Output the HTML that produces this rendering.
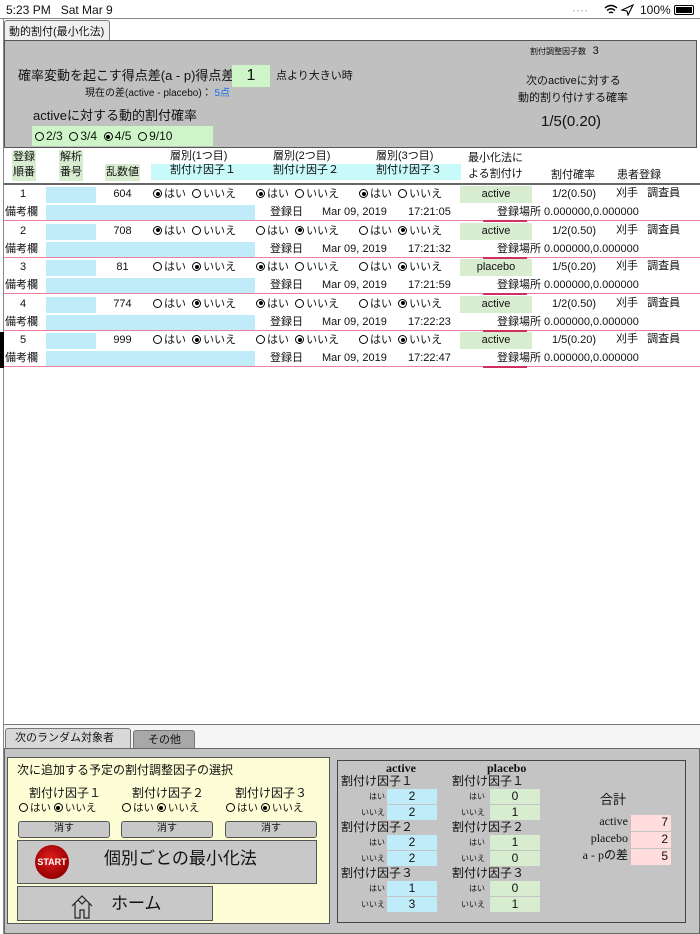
<!DOCTYPE html>
<html><head><meta charset="utf-8"><style>
*{margin:0;padding:0;box-sizing:border-box}
body{width:700px;height:934px;position:relative;background:#fff;font-family:"Liberation Sans","Noto Sans CJK JP",sans-serif;color:#111;overflow:hidden;font-size:11px;line-height:1.2}
.a{position:absolute;white-space:nowrap}
.r{display:inline-block;width:9px;height:9px;border:1px solid #000;border-radius:50%;vertical-align:-1px;margin-right:2px;position:relative}
.r.on::after{content:"";position:absolute;left:1.5px;top:1.5px;width:4px;height:4px;background:#000;border-radius:50%}
.blue{background:#c0ecfa}
.grn{background:#d8ecd0}
.cy{background:#c8fafa}
.btn{position:absolute;background:#c8c8c8;border:1.5px solid #555;border-radius:3px;text-align:center}
</style></head><body>
<div class="a" style="left:6px;top:3px;font-size:12px">5:23 PM&nbsp;&nbsp;&nbsp;Sat Mar 9</div>
<div class="a" style="left:572px;top:3px;font-size:12px;color:#999">&middot;&middot;&middot;&middot;</div>
<svg class="a" style="left:604px;top:4px" width="32" height="12" viewBox="0 0 32 12"><path d="M1 4 Q7 -1 13 4 M3 6.5 Q7 3 11 6.5 M5 9 Q7 7.5 9 9" fill="none" stroke="#000" stroke-width="1.4"/><path d="M18 6 L29 1 L24 11 L23 7 Z" fill="none" stroke="#000" stroke-width="1.1"/></svg>
<div class="a" style="left:640px;top:3px;font-size:12px">100%</div>
<div class="a" style="left:674px;top:5px;width:20px;height:10px;border:1px solid #000;border-radius:2px;padding:1px"><div style="background:#000;width:100%;height:100%"></div></div>
<div class="a" style="left:0;top:18px;width:700px;height:1px;background:#888"></div>
<div class="a" style="left:3px;top:19px;width:1px;height:915px;background:#888"></div>
<div class="a" style="left:4px;top:20px;width:106px;height:22px;background:#f0f0f0;border:1px solid #777;border-bottom:none;border-radius:3px 3px 0 0;padding:5px 0 0 4px;font-size:11px">動的割付(最小化法)</div>
<div class="a" style="left:4px;top:40px;width:693px;height:108px;background:#c0c0c0;border:1px solid #555"></div>
<div class="a" style="left:530px;top:45px;font-size:8px">割付調整因子数&nbsp;&nbsp;&nbsp;<span style="font-size:11px">3</span></div>
<div class="a" style="left:18px;top:68px;font-size:13px">確率変動を起こす得点差(a - p)得点差</div>
<div class="a" style="left:232px;top:65px;width:38px;height:22px;background:#cdf5c8;font-size:16px;text-align:center;line-height:22px">1</div>
<div class="a" style="left:276px;top:70px;font-size:11px">点より大きい時</div>
<div class="a" style="left:85px;top:88px;font-size:10px">現在の差(active - placebo)： <span style="color:#1e6ef0">5点</span></div>
<div class="a" style="left:33px;top:108px;font-size:13px">activeに対する動的割付確率</div>
<div class="a" style="left:32px;top:126px;width:181px;height:20px;background:#cdf5c8;font-size:12px;padding:3px 0 0 3px"><span class="r"></span>2/3&nbsp; <span class="r"></span>3/4&nbsp; <span class="r on"></span>4/5&nbsp; <span class="r"></span>9/10</div>
<div class="a" style="left:526px;top:75px;font-size:11px">次のactiveに対する</div>
<div class="a" style="left:518px;top:92px;font-size:11px">動的割り付けする確率</div>
<div class="a" style="left:541px;top:113px;font-size:15px">1/5(0.20)</div>
<div class="a grn" style="left:12px;top:150px;width:24px;height:31px;font-size:11px;line-height:15px;text-align:center">登録<br>順番</div>
<div class="a grn" style="left:59px;top:150px;width:24px;height:31px;font-size:11px;line-height:15px;text-align:center">解析<br>番号</div>
<div class="a grn" style="left:105px;top:164px;width:35px;height:17px;font-size:11px;line-height:17px;text-align:center">乱数値</div>
<div class="a cy" style="left:151px;top:164px;width:310px;height:16px"></div>
<div class="a" style="left:170px;top:150px;font-size:11px">層別(1つ目)</div>
<div class="a" style="left:273px;top:150px;font-size:11px">層別(2つ目)</div>
<div class="a" style="left:376px;top:150px;font-size:11px">層別(3つ目)</div>
<div class="a" style="left:170px;top:164px;font-size:11px">割付け因子１</div>
<div class="a" style="left:273px;top:164px;font-size:11px">割付け因子２</div>
<div class="a" style="left:376px;top:164px;font-size:11px">割付け因子３</div>
<div class="a" style="left:468px;top:152px;font-size:11px">最小化法に</div>
<div class="a" style="left:468px;top:168px;font-size:11px">よる割付け</div>
<div class="a" style="left:551px;top:169px;font-size:11px">割付確率</div>
<div class="a" style="left:617px;top:169px;font-size:11px">患者登録</div>
<div class="a" style="left:4px;top:183px;width:696px;height:2px;background:#666"></div>
<div id="rows"></div>
<div class="a" style="left:0;top:332px;width:4px;height:36px;background:#000"></div>
<div class="a" style="left:4px;top:724px;width:696px;height:1px;background:#777"></div>
<div class="a" style="left:4px;top:725px;width:696px;height:24px;background:#f5f5f5"></div>
<div class="a" style="left:5px;top:728px;width:126px;height:21px;background:#d8d8d8;border:1px solid #777;border-bottom:none;border-radius:3px 3px 0 0;font-size:11px;padding:3px 0 0 9px">次のランダム対象者</div>
<div class="a" style="left:133px;top:730px;width:62px;height:19px;background:#a8a8a8;border:1px solid #777;border-bottom:none;border-radius:3px 3px 0 0;font-size:11px;padding:3px 0 0 14px">その他</div>
<div class="a" style="left:4px;top:748px;width:696px;height:186px;background:#c4c4c4;border:1px solid #666"></div>
<div class="a" style="left:7px;top:757px;width:323px;height:167px;background:#fdfdd6;border:1px solid #555"></div>
<div class="a" style="left:17px;top:763px;font-size:12px">次に追加する予定の割付調整因子の選択</div>
<div class="a" style="left:29px;top:786px;font-size:12px">割付け因子１</div>
<div class="a" style="left:132px;top:786px;font-size:12px">割付け因子２</div>
<div class="a" style="left:235px;top:786px;font-size:12px">割付け因子３</div>
<div class="a" style="left:19px;top:802px;font-size:10.5px"><span class="r"></span>はい <span class="r on"></span>いいえ</div>
<div class="a" style="left:122px;top:802px;font-size:10.5px"><span class="r"></span>はい <span class="r on"></span>いいえ</div>
<div class="a" style="left:226px;top:802px;font-size:10.5px"><span class="r"></span>はい <span class="r on"></span>いいえ</div>
<div class="btn" style="left:18px;top:821px;width:92px;height:17px;font-size:10px;line-height:13px">消す</div>
<div class="btn" style="left:121px;top:821px;width:92px;height:17px;font-size:10px;line-height:13px">消す</div>
<div class="btn" style="left:225px;top:821px;width:92px;height:17px;font-size:10px;line-height:13px">消す</div>
<div class="a" style="left:17px;top:840px;width:300px;height:44px;background:#c8c8c8;border:1.5px solid #555"></div>
<div class="a" style="left:35px;top:845px;width:34px;height:34px;border-radius:50%;background:radial-gradient(circle at 45% 40%,#e02020,#900 70%,#300);color:#fff;font-size:9px;font-weight:bold;text-align:center;line-height:34px">START</div>
<div class="a" style="left:104px;top:849px;font-size:17px">個別ごとの最小化法</div>
<div class="a" style="left:17px;top:886px;width:196px;height:35px;background:#c8c8c8;border:1.5px solid #555"></div>
<svg class="a" style="left:70px;top:893px" width="24" height="26" viewBox="0 0 24 26"><path d="M2 13 L12 3 L22 13 M5 10 V25 H10 V17 H14 V25 H19 V10 M8 7 L12 11 L16 7" fill="none" stroke="#222" stroke-width="1.2"/></svg>
<div class="a" style="left:111px;top:894px;font-size:17px">ホーム</div>
<div class="a" style="left:337px;top:760px;width:349px;height:163px;border:1px solid #444"></div>
<div class="a" style="left:386px;top:761px;font-family:'Liberation Serif',serif;font-weight:bold;font-size:12px">active</div>
<div class="a" style="left:487px;top:761px;font-family:'Liberation Serif',serif;font-weight:bold;font-size:12px">placebo</div>
<div id="sum"></div>
<div class="a" style="left:600px;top:792px;font-size:13px">合計</div>
<div class="a" style="left:590px;top:814px;font-family:'Liberation Serif',serif;font-size:12px;width:38px;text-align:right">active</div>
<div class="a" style="left:580px;top:831px;font-family:'Liberation Serif',serif;font-size:12px;width:48px;text-align:right">placebo</div>
<div class="a" style="left:570px;top:848px;font-family:'Liberation Serif',serif;font-size:12px;width:58px;text-align:right">a - pの差</div>
<div class="a" style="left:631px;top:815px;width:40px;height:16px;background:#fdd;text-align:right;padding-right:3px;font-size:12px">7</div>
<div class="a" style="left:631px;top:832px;width:40px;height:16px;background:#fdd;text-align:right;padding-right:3px;font-size:12px">2</div>
<div class="a" style="left:631px;top:849px;width:40px;height:16px;background:#fdd;text-align:right;padding-right:3px;font-size:12px">5</div>
<script>
var rows=[["1","604",1,1,1,"active","1/2(0.50)","17:21:05"],["2","708",1,0,0,"active","1/2(0.50)","17:21:32"],["3","81",0,1,0,"placebo","1/5(0.20)","17:21:59"],["4","774",0,1,0,"active","1/2(0.50)","17:22:23"],["5","999",0,0,0,"active","1/5(0.20)","17:22:47"]];
var h="";
rows.forEach(function(r,i){var y=185+i*36.6;
function rad(x,v){return '<div class="a" style="left:'+x+'px;top:'+(y+3)+'px"><span class="r'+(v?' on':'')+'"></span>はい&nbsp; <span class="r'+(v?'':' on')+'"></span>いいえ</div>';}
h+='<div class="a" style="left:18px;top:'+(y+3)+'px;width:10px;text-align:center">'+r[0]+'</div>';
h+='<div class="a blue" style="left:46px;top:'+(y+2)+'px;width:50px;height:16px"></div>';
h+='<div class="a" style="left:105px;top:'+(y+3)+'px;width:35px;text-align:center">'+r[1]+'</div>';
h+=rad(153,r[2])+rad(256,r[3])+rad(359,r[4]);
h+='<div class="a grn" style="left:460px;top:'+(y+1)+'px;width:72px;height:17px;text-align:center;line-height:17px">'+r[5]+'</div>';
h+='<div class="a" style="left:552px;top:'+(y+3)+'px">'+r[6]+'</div>';
h+='<div class="a" style="left:616px;top:'+(y+2)+'px">刈手&nbsp;&nbsp;&nbsp;調査員</div>';
h+='<div class="a" style="left:5px;top:'+(y+21)+'px">備考欄</div>';
h+='<div class="a blue" style="left:46px;top:'+(y+20)+'px;width:209px;height:16px"></div>';
h+='<div class="a" style="left:270px;top:'+(y+21)+'px">登録日</div>';
h+='<div class="a" style="left:322px;top:'+(y+21)+'px">Mar 09, 2019</div>';
h+='<div class="a" style="left:408px;top:'+(y+21)+'px">'+r[7]+'</div>';
h+='<div class="a" style="left:497px;top:'+(y+21)+'px">登録場所 0.000000,0.000000</div>';
h+='<div class="a" style="left:4px;top:'+(y+35)+'px;width:696px;height:1px;background:#e8809e"></div>';
h+='<div class="a" style="left:483px;top:'+(y+35)+'px;width:44px;height:2px;background:#d03060"></div>';
});
document.getElementById("rows").innerHTML=h;
var s="",ac=[[2,2],[2,2],[1,3]],pl=[[0,1],[1,0],[0,1]],ly=[774,820,866];
for(var k=0;k<3;k++){var y=ly[k];
s+='<div class="a" style="left:341px;top:'+y+'px;font-size:12px">割付け因子'+["１","２","３"][k]+'</div>';
s+='<div class="a" style="left:452px;top:'+y+'px;font-size:12px">割付け因子'+["１","２","３"][k]+'</div>';
for(var j=0;j<2;j++){var yy=y+15+j*16;
s+='<div class="a" style="left:355px;top:'+(yy+3)+'px;width:30px;text-align:right;font-size:8px">'+(j?"いいえ":"はい")+'</div>';
s+='<div class="a blue" style="left:387px;top:'+yy+'px;width:50px;height:15px;text-align:center;font-size:12px;line-height:15px">'+ac[k][j]+'</div>';
s+='<div class="a" style="left:455px;top:'+(yy+3)+'px;width:30px;text-align:right;font-size:8px">'+(j?"いいえ":"はい")+'</div>';
s+='<div class="a grn" style="left:490px;top:'+yy+'px;width:50px;height:15px;text-align:center;font-size:12px;line-height:15px">'+pl[k][j]+'</div>';}}
document.getElementById("sum").innerHTML=s;
</script>
</body></html>
